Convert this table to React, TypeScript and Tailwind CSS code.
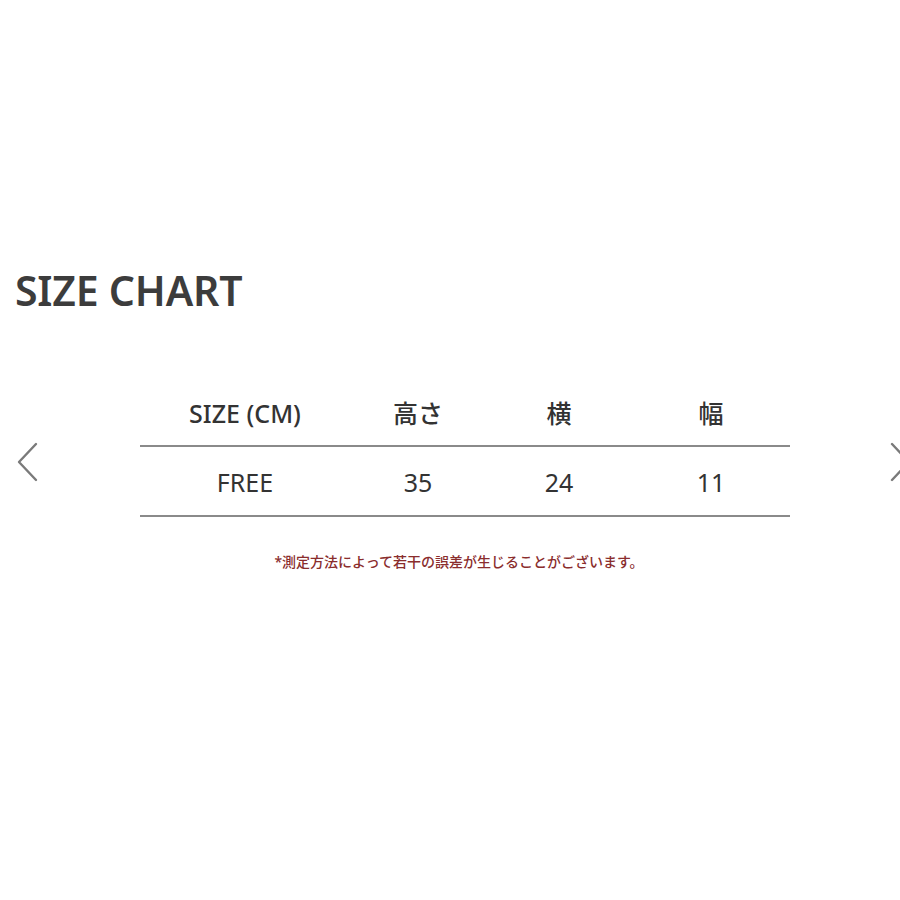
const FONT = { fontFamily: '"Noto Sans", "Noto Sans CJK JP", sans-serif' };

const HEAD = ['SIZE (CM)', '高さ', '横', '幅'];
const ROW = ['FREE', '35', '24', '11'];
const COLS = 'grid grid-cols-[210px_136px_146px_158px]';

function Chevron({ dir }: { dir: 'left' | 'right' }) {
  return (
    <svg width="24" height="40" viewBox="0 0 24 40" fill="none">
      <path
        d={dir === 'left' ? 'M20 2 L3 20 L20 38' : 'M4 2 L21 20 L4 38'}
        stroke="#7a7a7a"
        strokeWidth="2.4"
        strokeLinecap="round"
        strokeLinejoin="round"
      />
    </svg>
  );
}

export default function App() {
  return (
    <div className="relative w-[900px] h-[900px] bg-white overflow-hidden" style={FONT}>
      <div className="pt-[264px] pl-[15px]">
        <h1 className="text-[41px] leading-[52px] font-semibold text-[#3c3c3c] tracking-[-0.2px]">
          SIZE CHART
        </h1>
      </div>

      {/* Table */}
      <div className="mt-[73px] ml-[140px] w-[650px] text-[#333]">
        <div className={`${COLS} h-[56px] pb-[6px] items-center text-[25px] font-medium`}>
          {HEAD.map((h) => (
            <div key={h} className="text-center">
              {h}
            </div>
          ))}
        </div>
        <div className="h-[2px] bg-[#8a8a8a]" />
        <div className={`${COLS} h-[68px] pt-[4px] items-center text-[25px]`}>
          {ROW.map((c) => (
            <div key={c} className="text-center">
              {c}
            </div>
          ))}
        </div>
        <div className="h-[2px] bg-[#8a8a8a]" />
      </div>

      <p className="mt-[34px] text-center pl-[18px] text-[14px] text-[#8a2d2d] font-medium">
        *測定方法によって若干の誤差が生じることがございます。
      </p>

      {/* carousel arrows */}
      <div className="absolute left-[16px] top-[442px]">
        <Chevron dir="left" />
      </div>
      <div className="absolute left-[888px] top-[442px]">
        <Chevron dir="right" />
      </div>
    </div>
  );
}
